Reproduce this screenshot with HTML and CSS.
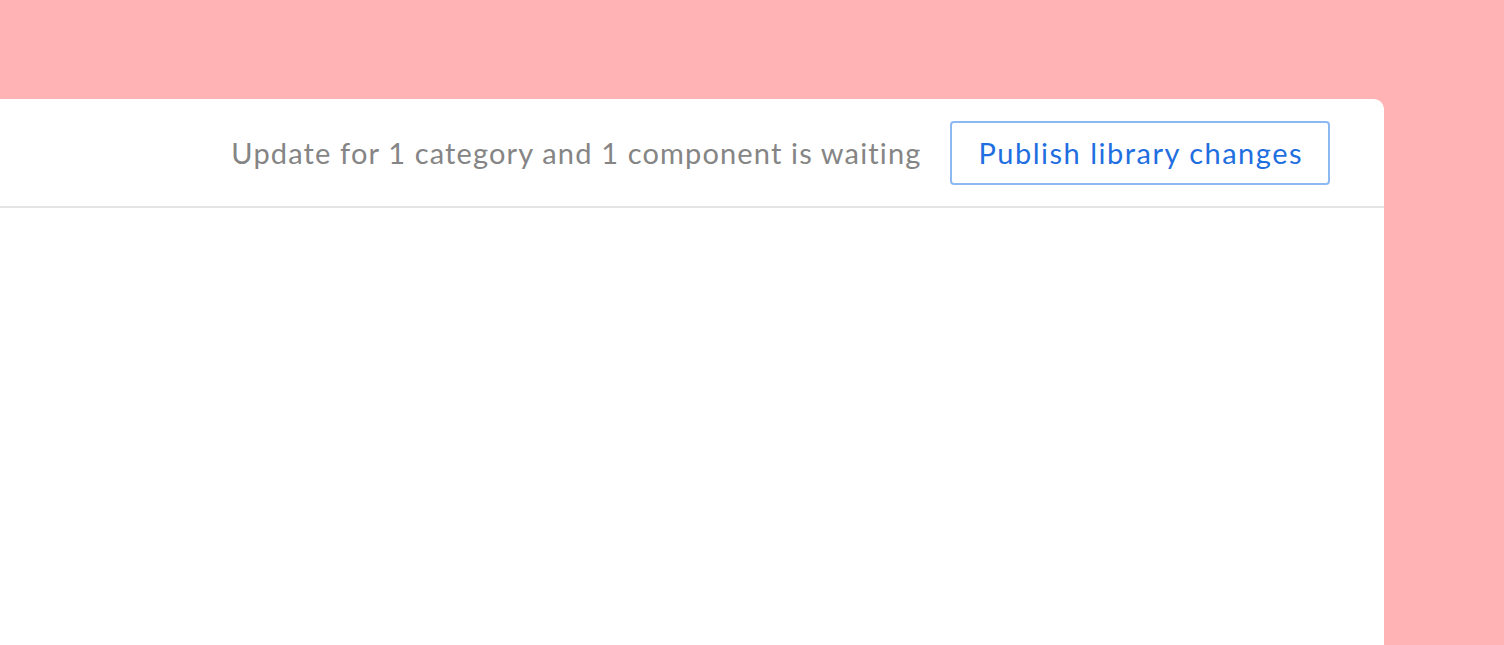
FILE: index.html
```html
<!DOCTYPE html>
<html lang="en">
<head>
  <meta charset="UTF-8" />
  <meta name="viewport" content="width=device-width, initial-scale=1.0"/>
  <title>Library</title>
  <link rel="stylesheet" href="styles.css">
</head>
<body>
  <div class="panel">
    <div class="toolbar">
      <span class="status">Update for 1 category and 1 component is waiting</span>
      <button class="publish">Publish library changes</button>
    </div>
    <div class="content"></div>
  </div>
</body>
</html>
```

FILE: styles.css
```css
body {
  font-family: Lato, "Open Sans", sans-serif;
  background: #ffb3b4;
  margin: 0;
  height: 645px;
  overflow: hidden;
}

.panel {
  margin-top: 99px;
  width: 1384px;
  height: 546px;
  background: #fff;
  border-radius: 0 10px 0 0;
}

.toolbar {
  height: 107px;
  border-bottom: 2px solid #e4e4e4;
  display: flex;
  justify-content: flex-end;
  align-items: center;
  gap: 28px;
  padding-right: 54px;
}

.status {
  font-size: 29px;
  letter-spacing: 1.15px;
  color: #858585;
}

.publish {
  font-family: inherit;
  font-size: 29px;
  letter-spacing: 1.5px;
  color: #1f6fe0;
  background: #fff;
  border: 2px solid #8db9f2;
  border-radius: 4px;
  height: 64px;
  padding: 0 25px 0 27px;
  cursor: pointer;
}
```
